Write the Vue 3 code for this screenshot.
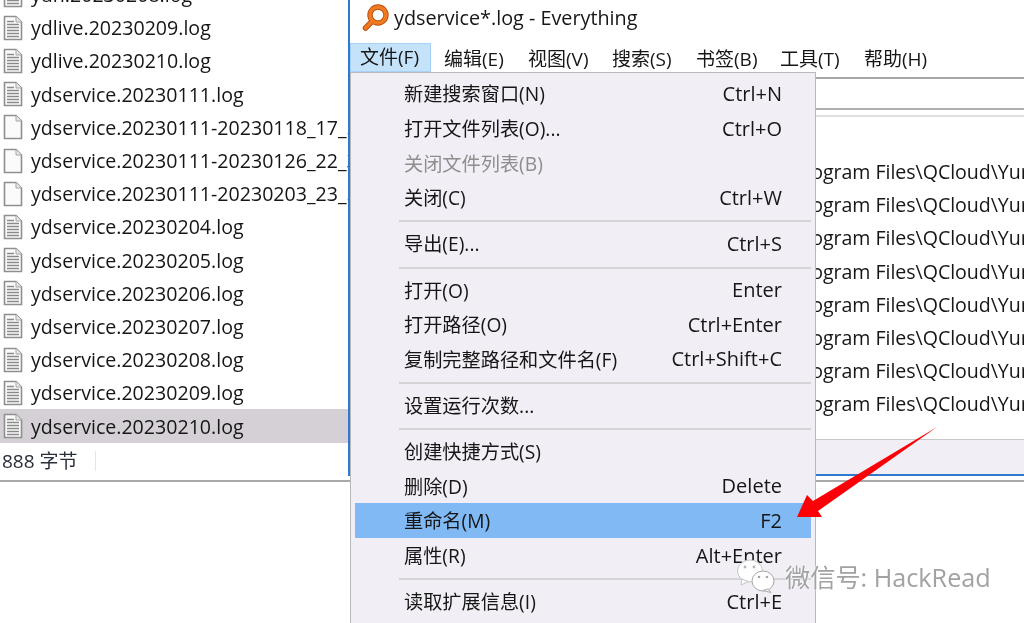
<script setup>
const files = [
  { name: 'yun.20230208.log', lines: true },
  { name: 'ydlive.20230209.log', lines: true },
  { name: 'ydlive.20230210.log', lines: true },
  { name: 'ydservice.20230111.log', lines: true },
  { name: 'ydservice.20230111-20230118_17_59_01.log', lines: false },
  { name: 'ydservice.20230111-20230126_22_30_12.log', lines: false },
  { name: 'ydservice.20230111-20230203_23_58_44.log', lines: false },
  { name: 'ydservice.20230204.log', lines: true },
  { name: 'ydservice.20230205.log', lines: true },
  { name: 'ydservice.20230206.log', lines: true },
  { name: 'ydservice.20230207.log', lines: true },
  { name: 'ydservice.20230208.log', lines: true },
  { name: 'ydservice.20230209.log', lines: true },
  { name: 'ydservice.20230210.log', lines: true, selected: true }
]

const menuBar = ['文件(F)', '编辑(E)', '视图(V)', '搜索(S)', '书签(B)', '工具(T)', '帮助(H)']

const menuGroups = [
  [
    { label: '新建搜索窗口(N)', key: 'Ctrl+N' },
    { label: '打开文件列表(O)...', key: 'Ctrl+O' },
    { label: '关闭文件列表(B)', key: '', disabled: true },
    { label: '关闭(C)', key: 'Ctrl+W' }
  ],
  [{ label: '导出(E)...', key: 'Ctrl+S' }],
  [
    { label: '打开(O)', key: 'Enter' },
    { label: '打开路径(O)', key: 'Ctrl+Enter' },
    { label: '复制完整路径和文件名(F)', key: 'Ctrl+Shift+C' }
  ],
  [{ label: '设置运行次数...', key: '' }],
  [
    { label: '创建快捷方式(S)', key: '' },
    { label: '删除(D)', key: 'Delete' },
    { label: '重命名(M)', key: 'F2', active: true },
    { label: '属性(R)', key: 'Alt+Enter' }
  ],
  [{ label: '读取扩展信息(I)', key: 'Ctrl+E' }]
]

const resultRows = 8
</script>

<template>
  <div class="screen">
    <div class="top">
      <section class="explorer">
        <ul class="file-list">
          <li v-for="f in files" :key="f.name" :class="['file-row', { selected: f.selected }]">
            <svg class="file-icon" width="20" height="26" viewBox="0 0 20 26">
              <path d="M1.5 1.5H13L18.5 7V24.5H1.5Z" fill="#fbfbfb" stroke="#8f8f8f" stroke-width="1.6" />
              <path d="M13 1.5V7H18.5" fill="#e8e8e8" stroke="#a5a5a5" />
              <path v-if="f.lines" d="M4 6.5H11M4 9.5H16M4 12.5H16M4 15.5H16M4 18.5H16M4 21.5H16" stroke="#8a8a8a" stroke-width="1.4" />
            </svg>
            <span class="file-name">{{ f.name }}</span>
          </li>
        </ul>
        <div class="explorer-status"><span>888 字节</span></div>
      </section>

      <section class="window">
        <header class="title-bar">
          <svg class="logo" width="28" height="28" viewBox="0 0 28 28">
            <circle cx="17" cy="11" r="8" fill="none" stroke="#b9500f" stroke-width="5.4" />
            <path d="M11.5 17L4.5 24" stroke="#b9500f" stroke-width="5.6" stroke-linecap="round" />
            <circle cx="17" cy="11" r="8" fill="none" stroke="#f07a22" stroke-width="3.6" />
            <path d="M11.5 17L4.5 24" stroke="#f07a22" stroke-width="3.8" stroke-linecap="round" />
          </svg>
          <span>ydservice*.log - Everything</span>
        </header>
        <nav class="menu-bar">
          <span v-for="(m, i) in menuBar" :key="m" :class="['menu-title', { open: i === 0 }]">{{ m }}</span>
        </nav>
        <div class="search-box"></div>
        <div class="results">
          <div v-for="n in resultRows" :key="n" class="result-row">C:\Program Files\QCloud\Yunjing\ydeyes</div>
        </div>
        <div class="window-status"></div>

        <div class="dropdown">
          <div v-for="(group, g) in menuGroups" :key="g" class="menu-group">
            <div v-for="item in group" :key="item.label"
              :class="['menu-item', { disabled: item.disabled, active: item.active }]">
              <span>{{ item.label }}</span>
              <span class="shortcut">{{ item.key }}</span>
            </div>
          </div>
        </div>
      </section>
    </div>

    <svg class="arrow" width="150" height="100" viewBox="0 0 150 100">
      <path d="M141 1L22 85L26 91L1 91L11 69L17 75Z" fill="#fb0007" />
    </svg>

    <div class="watermark">
      <svg width="40" height="34" viewBox="0 0 40 34">
        <ellipse cx="13" cy="12" rx="12.5" ry="11" fill="#fff" stroke="#c4c4c4" />
        <path d="M5 20L4 26L11 22.5Z" fill="#fff" stroke="#c4c4c4" />
        <ellipse cx="26" cy="22" rx="11" ry="10" fill="#fff" stroke="#a8a8a8" />
        <path d="M31 30L34 33.5L26 31.5Z" fill="#fff" stroke="#a8a8a8" />
        <circle cx="8" cy="8" r="1.4" fill="#b5b5b5" />
        <circle cx="17" cy="8" r="1.4" fill="#b5b5b5" />
        <circle cx="22" cy="18" r="1.3" fill="#a5a5a5" />
        <circle cx="30" cy="18" r="1.3" fill="#a5a5a5" />
      </svg>
      <span>微信号: HackRead</span>
    </div>
  </div>
</template>

<style scoped>
.screen {
  position: relative;
  width: 1024px;
  height: 623px;
  overflow: hidden;
  background: #fff;
  color: #161616;
  font-family: "Open Sans", "Noto Sans CJK SC", sans-serif;
  font-size: 19.6px;
  filter: blur(0.45px);
}

.top {
  display: flex;
  align-items: flex-start;
  height: 482px;
  border-bottom: 2px solid #a9a9a9;
  box-sizing: border-box;
}

.explorer {
  width: 348px;
  flex-shrink: 0;
  height: 480px;
  overflow: hidden;
}

.file-list {
  list-style: none;
  margin: -22px 0 0;
  padding: 0;
}

.file-row {
  display: flex;
  align-items: center;
  gap: 8px;
  height: 33.2px;
  padding-left: 3px;
  white-space: nowrap;
}

.file-row.selected {
  background: #d4d0d5;
}

.file-icon {
  flex-shrink: 0;
}

.explorer-status {
  display: flex;
  align-items: center;
  height: 37px;
  padding-left: 2px;
  font-size: 19px;
  color: #2a2f3a;
}

.explorer-status span {
  padding-right: 17px;
  border-right: 1px solid #e4e4e4;
  line-height: 20px;
}

.window {
  position: relative;
  flex: 1;
  display: flex;
  flex-direction: column;
  height: 476px;
  border-left: 2px solid #2f7ad0;
  border-bottom: 2px solid #2f7ad0;
  box-sizing: border-box;
}

.title-bar {
  display: flex;
  align-items: center;
  gap: 5px;
  height: 43px;
  padding: 0 0 8px 11px;
  box-sizing: border-box;
  font-size: 19.8px;
  flex-shrink: 0;
}

.menu-bar {
  display: flex;
  height: 29px;
  flex-shrink: 0;
  background: #fff;
  align-items: center;
  box-sizing: border-box;
}

.menu-title {
  padding-left: 13px;
  width: 84px;
  box-sizing: border-box;
  font-size: 19px;
  white-space: nowrap;
}

.menu-title.open {
  width: 81px;
  height: 29px;
  line-height: 27px;
  padding-left: 9px;
  background: #c5e2fb;
  border: 1px solid #a8d2f5;
}

.search-box {
  height: 29px;
  margin-top: 5px;
  border-top: 2px solid #a5a5a5;
  border-bottom: 2px solid #b0b0b0;
  flex-shrink: 0;
}

.results {
  flex: 1;
  margin-top: 5px;
  padding-top: 38px;
  border-top: 2px solid #dedede;
}

.result-row {
  height: 33.2px;
  line-height: 33.2px;
  margin-left: 417px;
  white-space: nowrap;
  overflow: hidden;
  letter-spacing: -0.05px;
}

.window-status {
  height: 34px;
  flex-shrink: 0;
  background: #f2eef5;
  border-top: 1px solid #c8c8c8;
}

.dropdown {
  position: absolute;
  left: 0;
  top: 72px;
  width: 466px;
  height: 560px;
  background: #f2eef5;
  border: 1px solid #b8b8b8;
  box-sizing: border-box;
  padding: 3px 4px;
  z-index: 2;
}

.menu-group + .menu-group {
  position: relative;
  margin-top: 5.7px;
  padding-top: 5.7px;
}

.menu-group + .menu-group::before {
  content: "";
  position: absolute;
  top: 0;
  left: 44px;
  right: 0;
  height: 2px;
  background: #d5d3d6;
}

.menu-item {
  display: flex;
  justify-content: space-between;
  align-items: center;
  height: 34.7px;
  padding: 0 29px 0 49px;
  font-size: 19.2px;
  white-space: nowrap;
}

.shortcut {
  font-size: 20px;
}

.menu-item.disabled {
  color: #8e8e8e;
}

.menu-item.active {
  background: #80b9f3;
}

.arrow {
  position: absolute;
  left: 796px;
  top: 426px;
  z-index: 3;
}

.watermark {
  position: absolute;
  left: 737px;
  top: 558px;
  display: flex;
  align-items: center;
  gap: 8px;
  font-size: 25.2px;
  color: #a2a2a2;
  text-shadow: 0 0 2px #fff, 0 0 2px #fff;
  z-index: 3;
  white-space: nowrap;
}
</style>
